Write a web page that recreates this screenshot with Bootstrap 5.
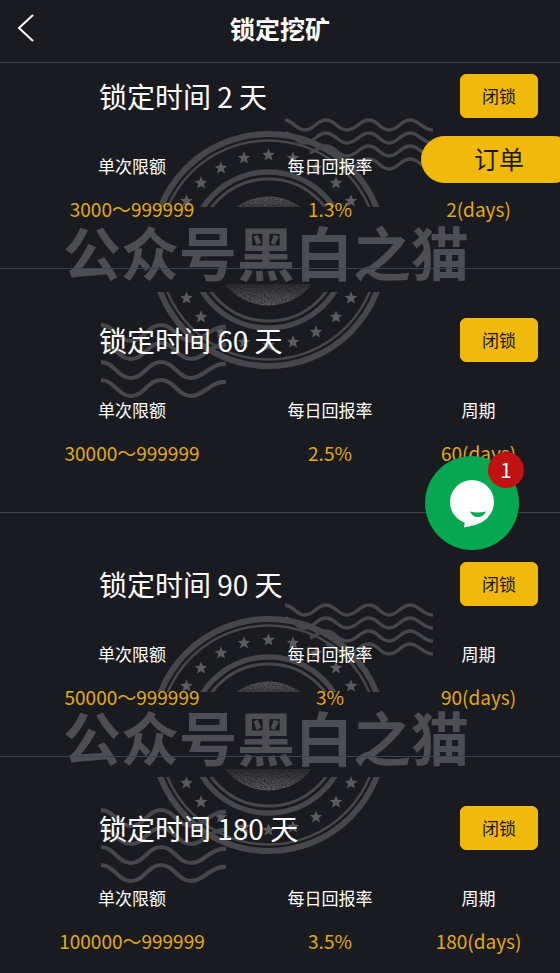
<!DOCTYPE html>
<html lang="zh-CN">
<head>
<meta charset="utf-8">
<meta name="viewport" content="width=device-width, initial-scale=1">
<title>锁定挖矿</title>
<link rel="stylesheet" href="https://cdn.jsdelivr.net/npm/bootstrap@5.3.0/dist/css/bootstrap.min.css">
<style>
  body { background: #1a1b20; color: #fff; font-family: "Noto Sans CJK SC", sans-serif; }
  .app-header { height: 63px; border-bottom: 1px solid #3a4146; }
  .app-header h1 { font-size: 25px; line-height: 36px; padding-bottom: 7px; }
  .back-link { left: 16px; top: 13px; line-height: 0; }
  .plan { padding: 49px 0 45px; border-bottom: 1px solid #3b4448; }
  .plan:first-child { padding-top: 11px; }
  .plan:last-child { padding-bottom: 17px; border-bottom: 0; }
  .plan-head { padding-left: 99px; padding-right: 22px; }
  .plan-head h2 { font-size: 28px; line-height: 44px; }
  .btn-gold { --bs-btn-bg: #f1b90b; --bs-btn-color: #1a1b20; --bs-btn-hover-bg: #dca808; --bs-btn-border-color: #f1b90b; }
  .lock-btn { width: 78px; height: 44px; font-size: 17px; line-height: 24px; border-radius: 6px; padding: 0; }
  .plan-body { margin-top: 36px; padding: 0 32px 0 33px; }
  .plan-body table { table-layout: fixed; }
  .plan-body th { font-size: 17px; line-height: 24px; height: 24px; padding: 0; }
  .plan-body td { font-size: 19px; line-height: 28px; padding: 17px 0 0; color: #e3aa16; white-space: nowrap; }
  .w-col { width: 40%; }
  .stamp-art { left: 0; top: 0; z-index: -1; pointer-events: none; }
  .order-btn { top: 136px; right: -17px; width: 156px; height: 47px; font-size: 25px; line-height: 34px; padding: 0 0 3px; }
  .chat-btn { top: 456px; right: 41px; width: 94px; height: 94px; background: #05a750; }
  .chat-count { top: -4px; right: -5px; width: 36px; height: 36px; background: #c01212; font-size: 20px; line-height: 36px; }
  .stamp-word { font: 700 58px "Noto Sans CJK SC", sans-serif; }
</style>
</head>
<body>
<div class="position-relative overflow-hidden min-vh-100 z-0">

  <svg class="stamp-art position-absolute" width="560" height="973" viewBox="0 0 560 973" aria-hidden="true">
    <defs>
      <clipPath id="ringClip"><path d="M0 0H560V207H0ZM0 292H560V500H0Z"/></clipPath>
      <clipPath id="discClip"><path d="M0 0H560V207H0ZM0 284H560V500H0Z"/></clipPath>
      <linearGradient id="discFade" x1="0" y1="0" x2="0" y2="1">
        <stop offset="0" stop-color="#58595d"/><stop offset=".12" stop-color="#3a3b40"/>
        <stop offset=".8" stop-color="#2a2b30"/><stop offset="1" stop-color="#5c5d61"/>
      </linearGradient>
      <filter id="grain" x="0" y="0" width="100%" height="100%">
        <feTurbulence type="fractalNoise" baseFrequency="0.7" numOctaves="2" seed="4"/>
        <feColorMatrix values="0 0 0 0 0  0 0 0 0 0  0 0 0 0 0  2 0 0 0 -0.2"/>
        <feComposite in="SourceGraphic" operator="in"/>
      </filter>
      <path id="star" d="M0-6.6 1.8-2.2 6.3-2 2.8.9 4 5.4 0 2.9-4 5.4-2.8.9-6.3-2-1.8-2.2Z"/>
      <path id="waveA" d="M285 120C294 121 296 130 305 130S317 120 326 120 338 130 347 130 360 120 369 120 380 130 389 130 401 120 410 120 423 130 433 130"/>
      <path id="waveB" d="M101 325C114 325 118 341 131 341S148 325 161 325 178 341 191 341 210 326 226 327"/>
      <g id="stamp" fill="none" stroke="#46474c">
        <g clip-path="url(#ringClip)">
          <circle cx="268.5" cy="250" r="116" stroke-width="6"/>
          <circle cx="268.5" cy="250" r="109.5" stroke-width="2.5"/>
          <circle cx="268.5" cy="250" r="78" stroke-width="5.5"/>
          <circle cx="268.5" cy="250" r="71" stroke-width="3"/>
          <g fill="#5a5b60" stroke="none">
            <use href="#star" x="268.5" y="155"/><use href="#star" x="244" y="158"/><use href="#star" x="221" y="168"/><use href="#star" x="201" y="183"/><use href="#star" x="186.5" y="201"/>
            <use href="#star" x="293" y="158"/><use href="#star" x="316" y="168"/><use href="#star" x="336" y="183"/><use href="#star" x="351" y="201"/>
            <use href="#star" x="268.5" y="345"/><use href="#star" x="244" y="342"/><use href="#star" x="221" y="332"/><use href="#star" x="201" y="317"/><use href="#star" x="186.5" y="298"/>
            <use href="#star" x="293" y="342"/><use href="#star" x="316" y="332"/><use href="#star" x="336" y="317"/><use href="#star" x="351" y="298"/>
          </g>
        </g>
        <g clip-path="url(#discClip)"><circle cx="268.5" cy="251" r="54.5" fill="url(#discFade)" stroke="none" filter="url(#grain)"/></g>
        <g stroke-width="3.4">
          <use href="#waveA"/><use href="#waveA" y="13"/>
          <path d="M310 153C317 150 320 146 326 146 335 146 338 156 347 156S360 146 369 146 380 156 389 156 401 146 410 146 423 156 433 156"/>
          <path d="M326 159C335 159 338 169 347 169S360 159 369 159 380 169 389 169 401 159 410 159 423 169 433 169"/>
        </g>
        <g stroke-width="4.2">
          <use href="#waveB"/><use href="#waveB" y="18"/><use href="#waveB" y="37"/><use href="#waveB" y="55"/>
        </g>
        <text class="stamp-word" x="63" y="276" fill="#4d4e53" stroke="none">公众号黑白之猫</text>
      </g>
    </defs>
    <use href="#stamp"/>
    <use href="#stamp" y="485"/>
  </svg>

  <header class="app-header d-flex align-items-center justify-content-center position-relative">
    <a class="back-link position-absolute" href="#" aria-label="返回">
      <svg width="20" height="30" viewBox="0 0 20 30" fill="none" stroke="#fff" stroke-width="2"><path d="M17 2 3 15 17 28"/></svg>
    </a>
    <h1 class="m-0 fw-bold">锁定挖矿</h1>
  </header>

  <main>
    <section class="plan">
      <div class="plan-head d-flex justify-content-between align-items-center">
        <h2 class="m-0 fw-normal">锁定时间 2 天</h2>
        <button type="button" class="btn btn-gold lock-btn">闭锁</button>
      </div>
      <div class="plan-body">
        <table class="w-100 text-center">
          <thead><tr><th class="w-col fw-normal" scope="col">单次限额</th><th class="w-col fw-normal" scope="col">每日回报率</th><th class="fw-normal" scope="col" aria-label="周期"></th></tr></thead>
          <tbody><tr><td>3000～999999</td><td>1.3%</td><td>2(days)</td></tr></tbody>
        </table>
      </div>
    </section>
    <section class="plan">
      <div class="plan-head d-flex justify-content-between align-items-center">
        <h2 class="m-0 fw-normal">锁定时间 60 天</h2>
        <button type="button" class="btn btn-gold lock-btn">闭锁</button>
      </div>
      <div class="plan-body">
        <table class="w-100 text-center">
          <thead><tr><th class="w-col fw-normal" scope="col">单次限额</th><th class="w-col fw-normal" scope="col">每日回报率</th><th class="fw-normal" scope="col">周期</th></tr></thead>
          <tbody><tr><td>30000～999999</td><td>2.5%</td><td>60(days)</td></tr></tbody>
        </table>
      </div>
    </section>
    <section class="plan">
      <div class="plan-head d-flex justify-content-between align-items-center">
        <h2 class="m-0 fw-normal">锁定时间 90 天</h2>
        <button type="button" class="btn btn-gold lock-btn">闭锁</button>
      </div>
      <div class="plan-body">
        <table class="w-100 text-center">
          <thead><tr><th class="w-col fw-normal" scope="col">单次限额</th><th class="w-col fw-normal" scope="col">每日回报率</th><th class="fw-normal" scope="col">周期</th></tr></thead>
          <tbody><tr><td>50000～999999</td><td>3%</td><td>90(days)</td></tr></tbody>
        </table>
      </div>
    </section>
    <section class="plan">
      <div class="plan-head d-flex justify-content-between align-items-center">
        <h2 class="m-0 fw-normal">锁定时间 180 天</h2>
        <button type="button" class="btn btn-gold lock-btn">闭锁</button>
      </div>
      <div class="plan-body">
        <table class="w-100 text-center">
          <thead><tr><th class="w-col fw-normal" scope="col">单次限额</th><th class="w-col fw-normal" scope="col">每日回报率</th><th class="fw-normal" scope="col">周期</th></tr></thead>
          <tbody><tr><td>100000～999999</td><td>3.5%</td><td>180(days)</td></tr></tbody>
        </table>
      </div>
    </section>
  </main>

  <button type="button" class="btn btn-gold order-btn rounded-pill position-absolute">订单</button>

  <button type="button" class="chat-btn btn border-0 p-0 rounded-circle position-absolute" aria-label="在线客服">
    <svg class="d-block" width="94" height="94" viewBox="0 0 94 94" aria-hidden="true">
      <circle cx="47" cy="46" r="22" fill="#fff"/>
      <path fill="#fff" d="M40 65 39 71.5C50 69.5 58 67 63 61L50 58Z"/>
      <path fill="#05a750" d="M45 55.5Q53 57.5 61 55.5C59 59.5 56.5 61 53 61S47 59.5 45 55.5Z"/>
    </svg>
    <span class="chat-count rounded-circle text-white position-absolute">1</span>
  </button>
</div>
<script src="https://cdn.jsdelivr.net/npm/bootstrap@5.3.0/dist/js/bootstrap.bundle.min.js"></script>
</body>
</html>
